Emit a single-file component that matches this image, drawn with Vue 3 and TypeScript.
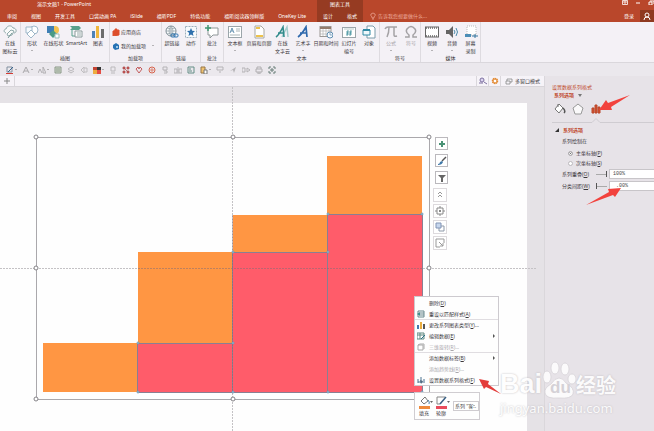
<script setup lang="ts">
import { ref } from 'vue'

interface Tool { icon: string; lines: string[]; drop?: boolean; dim?: boolean }
interface Group { id: string; name: string; tools: Tool[] }
interface MenuItem { text: string; key: string; more?: boolean; icon?: string; sub?: boolean; dim?: boolean; line?: boolean }

const tabs = ['审阅', '视图', '开发工具', '口袋动画 PA', 'iSlide', '福昕PDF', '特色功能', '福昕阅读器领鲜版', 'OneKey Lite']

// Inner markup of the 14 x 14 icons
const icons: Record<string, string> = {
  cloud: '<path d="M3 8C0 7 1 4 3 4C4 0 9 0 10 3C14 3 14 8 11 8M4 9L8 5L11 6L9 10L5 11Z" fill="#f8fafa" stroke="#8fa8aa"/><path d="M5 13L9 8" stroke="#779a98"/>',
  shapes: '<circle cx="9" cy="5" r="4" fill="#fff" stroke="#9fb7c9"/><path d="M1 2H7V8H1Z" fill="#f6fafd" stroke="#9fb7c9"/><path d="M6 5L10 9L6 13L2 9Z" fill="#fff" stroke="#9fb7c9"/>',
  online: '<circle cx="9" cy="5" r="4" fill="#f2c252"/><path d="M1 1H8V8H1Z" fill="#3f7fb5"/><path d="M7 5L11 9L7 13L3 9Z" fill="#4a9b86"/><path d="M9 9H13V13H9Z" fill="#fff" stroke="#9bb"/>',
  smart: '<path d="M1 1H10L12 3L10 5H1L3 3Z" fill="#58a08c"/><path d="M3 5V11H6" stroke="#58a08c" fill="none"/><path d="M6 6H13V12H6Z" fill="#fff" stroke="#8a9a9a"/><path d="M8 8H12M8 10H12" stroke="#9aa"/>',
  chart: '<path d="M1 6H4V13H1Z" fill="#4d82b8"/><path d="M5 1H8V13H5Z" fill="#efb73e"/><path d="M10 4H13V13H10Z" fill="#6c6c6c"/>',
  link: '<circle cx="6" cy="6" r="5" fill="#fafcfd" stroke="#7d8c94"/><path d="M1 6H11M6 1V11M2 3Q6 5 10 3M2 9Q6 7 10 9M6 1Q2 6 6 11M6 1Q10 6 6 11" fill="none" stroke="#8d9ca4" stroke-width=".7"/><rect x="6" y="9" width="4" height="3" rx="1" fill="none" stroke="#2f75b0"/><rect x="9" y="9" width="4" height="3" rx="1" fill="none" stroke="#2f75b0"/>',
  action: '<rect x="1.5" y="1.500" width="11" height="11" fill="#f7fafc" stroke="#9db0bd" stroke-dasharray="2 1"/><path d="M7 3L8.200 5.800L11 6L8.800 8L9.500 11L7 9.400L4.500 11L5.200 8L3 6L5.800 5.800Z" fill="#2e70ad"/>',
  comment: '<path d="M3 3H13V10H8L5 13V10H3Z" fill="#fff" stroke="#8e9798"/><path d="M3 0V6M0 3H6" stroke="#3f9773" stroke-width="1.500"/>',
  textbox: '<rect x=".5" y="1.500" width="13" height="11" fill="#fff" stroke="#9ba5aa"/><path d="M2 8L4 3L6 8M3 6H5" stroke="#41799f" fill="none" stroke-width=".8"/><path d="M8 4H12M8 6H12M2 10H12" stroke="#a9b4b8"/>',
  header: '<path d="M3 1H9L12 4V13H3Z" fill="#fff" stroke="#a8a8a0"/><path d="M4 2H8V4H4ZM4 10H11V12H4Z" fill="#edc24c"/>',
  wordcloud: '<path d="M7 12L12 2L13 12" stroke="#a3cccd" stroke-width="1.500" fill="none"/><path d="M1 12Q4 10 8 2L9 12M3 8H9" stroke="#318b8b" stroke-width="1.600" fill="none"/>',
  art: '<path d="M2 12Q6 9 10 2L11 12M4 8H11" stroke="#2f69ad" stroke-width="1.700" fill="none"/>',
  date: '<rect x="1" y="1.500" width="11" height="10" fill="#fff" stroke="#9b9894"/><path d="M1 3H12" stroke="#937c6d" stroke-width="2"/><path d="M4 4V11M7 4V11M10 4V11M1 6H12M1 9H12" stroke="#aaa" stroke-width=".6"/><circle cx="11" cy="10" r="3" fill="#f6fbff" stroke="#608eb0"/><path d="M11 8V10H13" stroke="#608eb0" fill="none" stroke-width=".7"/>',
  number: '<rect x=".5" y="2.500" width="13" height="10" fill="#fff" stroke="#9ba5aa"/><path d="M2 4H12" stroke="#bcc"/><path d="M6 5L5 11M9 5L8 11M4 7H10M4 9H10" stroke="#3a8d9b" stroke-width=".8"/>',
  object: '<path d="M5 1H11L13 3V13H5Z" fill="#fff" stroke="#7b9baa"/><path d="M1 5H8V10H1Z" fill="#eef7fb" stroke="#318aa5"/><path d="M1 5H8" stroke="#318aa5" stroke-width="2"/>',
  pi: '<path d="M1 4Q2 2 4 2H13M5 2Q5 8 3 12M10 2V10Q10 12 13 11" fill="none" stroke="#a4a2a5" stroke-width="1.500"/>',
  omega: '<path d="M1 12H5V10Q1 7 3 4Q7-1 11 4Q13 7 9 10V12H13" fill="none" stroke="#a4a2a5" stroke-width="1.500"/>',
  video: '<rect x=".5" y="2" width="13" height="10" fill="#fff" stroke="#656565"/><path d="M1 3H13M1 11H13" stroke="#656565" stroke-width="1.500" stroke-dasharray="1 1"/>',
  audio: '<path d="M1 5H4L8 1V13L4 9H1Z" fill="#656565"/><path d="M9 5Q11 7 9 9M11 3Q14 7 11 11" fill="none" stroke="#4b8cac"/>',
  screen: '<path d="M3 1H12V10H3Z" fill="#fff" stroke="#bbb" stroke-dasharray="1 1"/><path d="M1 9H7V12H1Z" fill="#4c8eb7"/><path d="M8 11H14M11 9V13" stroke="#3577a0"/>',
}

const groups: Group[] = [
  { id: 'cloud', name: '', tools: [{ icon: 'cloud', lines: ['在线', '图标云'] }] },
  { id: 'art', name: '插图', tools: [{ icon: 'shapes', lines: ['形状'], drop: true }, { icon: 'online', lines: ['在线形状'] }, { icon: 'smart', lines: ['SmartArt'] }, { icon: 'chart', lines: ['图表'] }] },
  { id: 'addin', name: '加载项', tools: [] },
  { id: 'link', name: '链接', tools: [{ icon: 'link', lines: ['超链接'] }, { icon: 'action', lines: ['动作'] }] },
  { id: 'note', name: '批注', tools: [{ icon: 'comment', lines: ['批注'] }] },
  { id: 'text', name: '文本', tools: [
    { icon: 'textbox', lines: ['文本框'], drop: true }, { icon: 'header', lines: ['页眉和页脚'] }, { icon: 'wordcloud', lines: ['在线', '文字云'] },
    { icon: 'art', lines: ['艺术字'], drop: true }, { icon: 'date', lines: ['日期和时间'] }, { icon: 'number', lines: ['幻灯片', '编号'] }, { icon: 'object', lines: ['对象'] }] },
  { id: 'symbol', name: '符号', tools: [{ icon: 'pi', lines: ['公式'], drop: true, dim: true }, { icon: 'omega', lines: ['符号'], dim: true }] },
  { id: 'media', name: '媒体', tools: [{ icon: 'video', lines: ['视频'], drop: true }, { icon: 'audio', lines: ['音频'], drop: true }, { icon: 'screen', lines: ['屏幕', '录制'] }] },
]

// Quick access icons, 8 x 8
const quick: string[] = [
  '<path d="M1 1H6V6H1Z" fill="none" stroke="#8290a0"/><path d="M2 6L7 1" stroke="#39658e"/><path d="M0 7.500H7" stroke="#d33c35"/>',
  '<path d="M1 7L4 1L7 7M2 5H6" fill="none" stroke="#aaa8ab"/>',
  '<path d="M0 7L2 3L4 7M5 1V7H8Z" fill="none" stroke="#b0aeb1"/>',
  '<path d="M1 1H7V7H1Z" fill="#d3ddce" stroke="#8a9788"/><path d="M2 3H6M2 5H6" stroke="#8a9788"/>',
  '<path d="M4 1L7 3L4 5L1 3ZM1 5L4 7L7 5" fill="none" stroke="#bbb9bc"/>',
  '<path d="M1 4L4 1V7ZM4 2H7V6H4" fill="none" stroke="#c0bec1"/>',
  '<path d="M0 1H4V4H0Z" fill="#c34434"/><path d="M4 1H8V4H4Z" fill="#333"/><path d="M0 4H4V8H0Z" fill="#edac40"/><path d="M4 4H8V8H4Z" fill="#e34d45"/>',
  '<path d="M2 1H6V5H2ZM2 7H6" fill="none" stroke="#bbb9bc"/>',
  '<path d="M1 1H3V3H1ZM5 1H7V3H5ZM1 5H3V7H1ZM5 5H7V7H5ZM2 2L6 6" fill="#d85858" stroke="#a64b4b" stroke-width=".7"/>',
  '<path d="M1 3L3 1L4 3L5 1L7 3L4 7Z" fill="none" stroke="#c45d5d"/>',
  '<circle cx="4" cy="4" r="3" fill="none" stroke="#d7644d"/><path d="M4 2V6M2 4H6" stroke="#d7644d" stroke-width=".7"/>',
  '<path d="M2 1H6V4H2ZM3 5H6V7H3" fill="none" stroke="#b5b3b6"/>',
  '<path d="M0 3H3V7H0ZM4 1V8M5 3H8V7H5Z" fill="none" stroke="#b5b3b6"/>',
  '<path d="M1 1H7V7H1ZM2 3H4M2 5H5" fill="none" stroke="#658e86"/>',
  '<path d="M1 1H5V7H1Z" fill="#efc270" stroke="#987644"/><path d="M4 4H7V8H4Z" fill="#fff" stroke="#777"/>',
  '<path d="M1 1H7V4H1ZM3 6H5" fill="none" stroke="#b5b3b6"/>',
  '<path d="M1 5L7 1L5 7L4 4Z" fill="#b5b3b6"/>',
  '<path d="M0 2H3V6H0ZM5 2L8 4L5 6Z" fill="none" stroke="#b5b3b6"/>',
  '<path d="M2 3V1H6V3M1 3H7V6H1ZM3 6V8H5V6" fill="none" stroke="#b0aeb1"/>',
  '<path d="M1 3V1H3M5 1H7V3M7 5V7H5M3 7H1V5M3 3H5V5H3Z" fill="none" stroke="#687e79"/>',
]

const menu: MenuItem[] = [
  { text: '删除', key: 'D' },
  { text: '重设以匹配样式', key: 'A', icon: '<path d="M1 1H7V7H1ZM3 3H7M3 5H7" fill="#fff" stroke="#69878c"/><path d="M0 4L3 2V6Z" fill="#3d8c8b"/>' },
  { text: '更改系列图表类型', key: 'Y', more: true, line: true, icon: '<path d="M0 4H2V8H0Z" fill="#4277b0"/><path d="M3 1H5V8H3Z" fill="#e9ad3e"/><path d="M6 3H8V8H6Z" fill="#555"/>' },
  { text: '编辑数据', key: 'E', sub: true, icon: '<path d="M0 1H7V7H0ZM0 3H7M3 1V7" fill="#fff" stroke="#5e8880"/><path d="M4 7L8 3" stroke="#276f86"/>' },
  { text: '三维旋转', key: 'R', more: true, dim: true, icon: '<path d="M1 2H6V7H1ZM1 2L3 1H7V6" fill="none" stroke="#aaa"/>' },
  { text: '添加数据标签', key: 'B', sub: true, line: true },
  { text: '添加趋势线', key: 'R', more: true, dim: true },
  { text: '设置数据系列格式', key: 'F', icon: '<path d="M1 3V7M4 1V7M7 3V7M1 6H6" stroke="#4b7390" fill="none"/><path d="M3 4L6 5L4 8Z" fill="#526a80"/>' },
]

const side: string[] = [
  '<path d="M5 2V8M2 5H8" stroke="#4a9276" stroke-width="2"/>',
  '<path d="M5 5L9 1" stroke="#555" stroke-width="1.500"/><path d="M1 8Q3 8 3 6L5 5L6 6Q5 9 1 9Z" fill="#3f78a8"/>',
  '<path d="M1 2H9L6 5V9H4V5Z" fill="#666"/>',
]
const float: string[] = [
  '<path d="M3 4L5 2L7 4M3 7L5 5L7 7" stroke="#999" fill="none"/>',
  '<path d="M2 2H8V8H2ZM0 5H2M8 5H10M5 0V2M5 8V10" fill="none" stroke="#888"/><path d="M4 4H6V6H4Z" fill="#888"/>',
  '<path d="M4 4H9V9H4Z" fill="#fff" stroke="#8d99a8"/><path d="M1 1H6V6H1Z" fill="#c6d6ed" stroke="#8194b5"/>',
  '<path d="M9 5V1H1V9H5M4 4L8 8M5 8H8V5" fill="none" stroke="#999"/>',
]

const bars = [
  { x: 43, top: 256, base: 256, bottom: 305, pink: false },
  { x: 138, top: 165, base: 256, bottom: 305, pink: true },
  { x: 233, top: 128, base: 165, bottom: 305, pink: true },
  { x: 327, top: 69, base: 127, bottom: 305, pink: true },
]
const frameDots = [[36, 50], [233, 50], [429, 50], [36, 181], [429, 181], [36, 312], [233, 312], [429, 312]]
const seriesDots = [[138, 256], [233, 256], [138, 305], [233, 305], [233, 165], [328, 165], [328, 305], [328, 127], [422, 127], [422, 305]]

const axis = ref('primary')
const overlap = ref('100%')
const gapWidth = ref(' .00%')
</script>

<template>
  <div class="app">
    <header class="top">
      <div class="main-tabs">
        <div class="title">演示文稿1 - PowerPoint</div>
        <nav class="tabs"><button v-for="t in tabs" :key="t">{{ t }}</button></nav>
      </div>
      <div class="context">
        <div class="context-title">图表工具</div>
        <nav class="tabs"><button>设计</button><button>格式</button></nav>
      </div>
      <div class="tell">
        <svg width="6" height="8" viewBox="0 0 6 8"><path d="M2 5Q0 3 1 2Q3 0 5 2Q6 3 4 5V6H2ZM2 7H4" fill="none" stroke="#eba18f" stroke-width=".8" /></svg>
        <span>告诉我您想要做什么...</span>
      </div>
      <div class="account">
        <div class="win">
          <button aria-label="功能区显示选项"><svg width="6" height="5" viewBox="0 0 6 5"><path d="M.5 .5H5.500V4.500H.5ZM3 1V4M1 2H5" fill="none" stroke="#fff" stroke-width=".8" /></svg></button>
          <button aria-label="最小化"><svg width="6" height="5" viewBox="0 0 6 5"><path d="M1 3H5" stroke="#fff" /></svg></button>
          <button aria-label="还原"><svg width="6" height="5" viewBox="0 0 6 5"><path d="M2 1H6V4M1 2H4V5H1Z" fill="none" stroke="#fff" /></svg></button>
        </div>
        <div class="login">
          <button>登录</button>
          <button class="person" aria-label="共享"><svg width="8" height="8" viewBox="0 0 8 8"><circle cx="4" cy="3" r="2" fill="none" stroke="#fff" /><path d="M1 8Q1 5 4 5Q7 5 7 8" fill="none" stroke="#fff" /></svg></button>
        </div>
      </div>
    </header>

    <section class="ribbon">
      <div v-for="g in groups" :key="g.id" class="group" :class="g.id">
        <div v-if="g.id === 'addin'" class="addins">
          <button><svg width="8" height="8" viewBox="0 0 8 8"><path d="M1 3L7 2V7L1 8ZM3 3V1H5V3" fill="#dd4e2c" stroke="#dd4e2c" /></svg><span>应用商店</span></button>
          <button><svg width="8" height="8" viewBox="0 0 8 8"><path d="M1 3L4 1L7 3V7L3 8L1 6Z" fill="#2673b5" /><circle cx="5" cy="5" r="1" fill="#c8e4f5" /></svg><span>我的加载项</span><i class="caret"></i></button>
        </div>
        <div v-else class="tools">
          <button v-for="t in g.tools" :key="t.icon" class="tool" :class="{ dim: t.dim }">
            <svg width="14" height="14" viewBox="0 0 14 14" v-html="icons[t.icon]"></svg>
            <span v-for="l in t.lines" :key="l">{{ l }}</span>
            <i v-if="t.drop" class="caret"></i>
          </button>
        </div>
        <div class="group-name">{{ g.name }}</div>
      </div>
    </section>

    <div class="quick">
      <button v-for="(q, i) in quick" :key="i" aria-label="快速访问">
        <svg width="8" height="8" viewBox="0 0 8 8" v-html="q"></svg>
        <i v-if="[0, 1, 2, 6, 14].includes(i)" class="caret"></i>
      </button>
    </div>

    <main class="body">
      <div class="work">
        <div class="doc-tabs">
          <button class="plus" aria-label="新建"><svg width="6" height="6" viewBox="0 0 6 6"><path d="M3 0V6M0 3H6" stroke="#888" /></svg></button>
          <div class="doc-space"></div>
          <button class="small" aria-label="搜索"><svg width="8" height="8" viewBox="0 0 8 8"><circle cx="3" cy="3" r="2" fill="#dcd5ef" stroke="#7c70a0" /><path d="M5 5L8 7M0 6H4" stroke="#7c70a0" /></svg></button>
          <button class="small" aria-label="设置"><svg width="8" height="8" viewBox="0 0 8 8"><circle cx="4" cy="4" r="2.500" fill="#fff" stroke="#e28a34" stroke-width="1.500" stroke-dasharray="1.400 .5" /><circle cx="4" cy="4" r="2" fill="none" stroke="#e28a34" /></svg></button>
          <button class="multi"><svg width="8" height="7" viewBox="0 0 8 7"><path d="M2 3V1H7V4H5M1 3H5V6H1Z" fill="none" stroke="#888" stroke-width=".8" /></svg>多窗口模式</button>
        </div>
        <div class="stage">
          <div class="slide"></div>
          <svg class="chart" width="545" height="344" viewBox="0 0 545 344">
            <path d="M232.500 0V344M0 181.500H537" class="guide" />
            <template v-for="b in bars" :key="b.x">
              <rect :x="b.x" :y="b.top" width="95" :height="(b.pink ? b.base : b.bottom) - b.top" fill="#ff9643" />
              <rect v-if="b.pink" :x="b.x" :y="b.base" width="95" :height="b.bottom - b.base" fill="#ff5c6a" />
            </template>
            <path d="M137.500 305.500V256.500H232.500V165.500H327.500V127.500H422.500V305.500ZM232.500 165V305M327.500 127V305" class="outline" />
            <rect x="36.500" y="50.500" width="393" height="262" fill="none" stroke="#aaa8ac" />
            <path d="M232.500 128V305M138 181.500H422" class="guide faint" />
            <circle v-for="d in frameDots" :key="d.join()" :cx="d[0]" :cy="d[1]" r="2" fill="#fff" stroke="#858388" />
            <circle v-for="d in seriesDots" :key="d.join()" :cx="d[0]" :cy="d[1]" r="1" fill="#dff1fa" stroke="#6397b8" />
          </svg>

          <div class="side">
            <button v-for="(s, i) in side" :key="i" aria-label="图表按钮"><svg width="10" height="10" viewBox="0 0 10 10" v-html="s"></svg></button>
          </div>
          <div class="side floating">
            <button v-for="(s, i) in float" :key="i" aria-label="浮动工具"><svg width="10" height="10" viewBox="0 0 10 10" v-html="s"></svg></button>
          </div>

          <div class="menu" role="menu">
            <button v-for="m in menu" :key="m.text" role="menuitem" :class="{ dim: m.dim, line: m.line }">
              <svg width="8" height="8" viewBox="0 0 8 8" v-html="m.icon ?? ''"></svg>
              <span>{{ m.text }}(<u>{{ m.key }}</u>){{ m.more ? '...' : '' }}</span>
              <i v-if="m.sub" class="right"></i>
            </button>
          </div>
          <div class="mini">
            <button><svg width="14" height="13" viewBox="0 0 14 13"><path d="M2 5L6 1L9 5L5 8Z" fill="#fff" stroke="#777" /><path d="M9 4Q11 6 10 8" stroke="#467fa9" fill="none" /><path d="M0 10H11V13H0Z" fill="#ef8a3c" /><path d="M11 5H14L12.500 7Z" fill="#666" /></svg>填充</button>
            <button><svg width="14" height="13" viewBox="0 0 14 13"><path d="M9 1H1V8H4" fill="none" stroke="#888" /><path d="M4 8L10 1" stroke="#385f83" stroke-width="1.500" /><path d="M0 10H11V13H0Z" fill="#e94c5c" /><path d="M11 5H14L12.500 7Z" fill="#666" /></svg>轮廓</button>
            <select aria-label="图表元素"><option>系列 "客..</option></select>
            <i class="caret"></i>
          </div>
          <svg class="menu-arrow" width="22" height="16" viewBox="0 0 22 16"><path d="M0 0L10 2L9 5L22 15L7 8L5 10Z" fill="#e33d3b" /></svg>
        </div>
      </div>

      <aside class="pane">
        <h2>设置数据系列格式</h2>
        <button class="options">系列选项<i></i></button>
        <div class="kinds">
          <button aria-label="填充与线条"><svg width="12" height="12" viewBox="0 0 12 12"><path d="M1 6L5 1L9 5L5 10ZM4 4V1" fill="#fff" stroke="#777" /><path d="M9 5Q12 8 10 10" fill="none" stroke="#555" stroke-width="1.500" /></svg></button>
          <button aria-label="效果"><svg width="12" height="12" viewBox="0 0 12 12"><path d="M6 1L11 5L9 11H3L1 5Z" fill="#faf9fa" stroke="#999" /></svg></button>
          <button aria-label="系列选项"><svg width="12" height="12" viewBox="0 0 12 12"><path d="M2 5H4V10H2ZM5 2H7V10H5ZM8 4H10V10H8Z" fill="#d8532f" stroke="#b7472a" /></svg></button>
        </div>
        <svg class="notch" width="102" height="5" viewBox="0 0 102 5"><path d="M0 4.500H40L44 .5L48 4.500H102" fill="none" stroke="#cfccd1" /></svg>
        <h3><i></i>系列选项</h3>
        <fieldset>
          <legend>系列绘制在</legend>
          <label><input v-model="axis" type="radio" name="axis" value="primary" /><span>主坐标轴(<u>P</u>)</span></label>
          <label><input v-model="axis" type="radio" name="axis" value="secondary" /><span>次坐标轴(<u>S</u>)</span></label>
        </fieldset>
        <div class="field">
          <label for="overlap">系列重叠(<u>O</u>)</label>
          <input class="range" type="range" value="100" aria-label="系列重叠滑块" />
          <input id="overlap" v-model="overlap" class="value" type="text" />
        </div>
        <div class="field">
          <label for="gap">分类间距(<u>W</u>)</label>
          <input class="range" type="range" value="0" aria-label="分类间距滑块" />
          <input id="gap" v-model="gapWidth" class="value" type="text" />
        </div>
        <svg class="arrow-top" width="32" height="18" viewBox="0 0 32 18"><path d="M0 15L7 5L9 8L31 0L12 12L13 15Z" fill="#f2423d" /></svg>
        <svg class="arrow-low" width="36" height="18" viewBox="0 0 36 18"><path d="M35 1L29 10L27 8L0 18L23 5L22 2Z" fill="#f2423d" /></svg>
      </aside>
    </main>

    <div class="mark">
      <div class="brand">
        <span class="bai">Bai</span>
        <span class="paw">
          <svg width="34" height="38" viewBox="0 0 34 38"><g fill="#fff" stroke="#d4d1d6" stroke-width=".8"><ellipse cx="5" cy="16" rx="4" ry="6" /><ellipse cx="13" cy="7" rx="4" ry="6" /><ellipse cx="23" cy="8" rx="4" ry="6" /><ellipse cx="30" cy="18" rx="4" ry="5" /><path d="M17 17Q21 17 24 22Q33 27 31 33Q29 38 17 37Q4 38 3 32Q2 27 9 23Q13 17 17 17Z" /></g></svg>
          <b>du</b>
        </span>
        <span class="jy">经验</span>
      </div>
      <div class="url">jingyan.baidu.com</div>
    </div>
  </div>
</template>

<style>
body { margin: 0; overflow: hidden; }
</style>

<style scoped>
.app { position: relative; display: flex; flex-direction: column; min-height: 100vh; overflow: hidden; background: #e7e3e8; color: #3b383c; font: 5px/8px "Noto Sans", "Noto Sans CJK SC", sans-serif; }
button { display: flex; align-items: center; margin: 0; padding: 0; border: 0; background: none; color: inherit; font: inherit; white-space: nowrap; }
svg { display: block; flex: none; }
.caret { display: block; width: 0; height: 0; border: 1px solid transparent; border-top-color: #777; }

.top { display: flex; height: 22px; background: #b9472b; color: #fff; white-space: nowrap; }
.main-tabs { width: 317px; }
.title { height: 9px; padding-left: 37px; }
.tabs { display: flex; gap: 14px; height: 13px; padding-left: 7px; align-items: center; }
.context { width: 46px; background: #963b22; }
.context .tabs { padding-left: 6px; }
.context-title { height: 9px; text-align: center; }
.tell { display: flex; flex: 1; align-items: center; gap: 2px; padding: 9px 0 0 7px; color: #ecaa9b; }
.win { display: flex; justify-content: flex-end; gap: 7px; height: 10px; }
.win button { height: 5px; }
.login { display: flex; justify-content: flex-end; align-items: center; gap: 6px; height: 12px; }
.person { height: 12px; padding: 0 3px; background: #8e3920; }

.ribbon { display: flex; box-sizing: border-box; height: 41px; background: #f4f1f6; border-bottom: 1px solid #dad7dc; }
.group { display: flex; flex-direction: column; box-sizing: border-box; border-right: 1px solid #dedbe0; }
.tools { display: grid; flex: 1; align-items: start; padding-top: 3px; }
.tool { flex-direction: column; justify-self: center; }
.tool .caret { margin-top: 3px; }
.dim { color: #aaa7ac; }
.group-name { height: 7px; line-height: 7px; text-align: center; }
.cloud { width: 21px; }
.art { width: 89px; }
.art .tools { grid-template-columns: 22px 21px 25px 18px; }
.addin { width: 52px; }
.link { width: 39px; }
.link .tools { grid-template-columns: 20px 18px; }
.note { width: 23px; }
.text { width: 156px; }
.text .tools { grid-template-columns: 22px 26px 21px 20px 26px 20px 20px; }
.symbol { width: 41px; }
.symbol .tools { grid-template-columns: 22px 18px; }
.media { width: 60px; }
.media .tools { grid-template-columns: 22px 18px 19px; }
.addins { display: flex; flex: 1; flex-direction: column; gap: 6px; padding: 6px 0 0 2px; }
.addins button { gap: 1px; }
.addins .caret { margin-left: 5px; }

.quick { display: flex; align-items: center; gap: 5px; height: 13px; padding-left: 6px; background: #ebe8ed; }
.quick button { gap: 1px; }

.body { display: flex; flex: 1; }
.work { display: flex; flex: 1; flex-direction: column; min-width: 0; }
.doc-tabs { display: flex; box-sizing: border-box; height: 11px; border-bottom: 1px solid #d8d5da; background: #f6f3f8; }
.doc-tabs button { justify-content: center; box-sizing: border-box; border-right: 1px solid #dad7dc; }
.plus { width: 15px; }
.doc-space { flex: 1; border-right: 1px solid #dad7dc; }
.small { width: 12px; }
.multi { width: 44px; gap: 2px; }
.stage { position: relative; flex: 1; box-sizing: border-box; padding: 16px 17px 0 0; background: #e5e2e6; border-right: 1px solid #dad7db; display: flex; }
.slide { flex: 1; background: #fefefe; }
.chart { position: absolute; left: 0; top: 0; }
.guide { fill: none; stroke: #c4c2c5; stroke-dasharray: 2 1; }
.faint { stroke: #7d6c78; stroke-opacity: .5; }
.outline { fill: none; stroke: #8a7f92; }

.side { position: absolute; left: 435px; top: 50px; display: flex; flex-direction: column; gap: 4px; }
.side button { justify-content: center; box-sizing: border-box; width: 13px; height: 13px; border: 1px solid #bbb9bd; background: #fff; }
.floating { left: 433px; top: 101px; gap: 2px; }
.floating button { width: 14px; height: 14px; border-color: #dddadd; }

.menu { position: absolute; left: 414px; top: 209px; box-sizing: border-box; width: 85px; border: 1px solid #cdcacf; background: #fefefe; }
.menu button { box-sizing: border-box; width: 100%; height: 11px; padding-left: 2px; gap: 4px; }
.menu .line { border-top: 1px solid #e0dde1; }
.right { width: 0; height: 0; margin-left: auto; margin-right: 3px; border: 2px solid transparent; border-right: 0; border-left-color: #555; }
.mini { position: absolute; left: 414px; top: 305px; box-sizing: border-box; width: 66px; height: 28px; display: flex; align-items: center; gap: 3px; padding-left: 4px; border: 1px solid #d0cdd1; background: #fefefe; }
.mini button { flex-direction: column; align-items: flex-start; }
.mini select { appearance: none; box-sizing: border-box; width: 26px; height: 10px; padding: 0 1px; border: 1px solid #cfccd0; border-radius: 0; background: #fff; color: #444; font: inherit; }
.mini .caret { position: absolute; right: 4px; }
.menu-arrow { position: absolute; left: 479px; top: 292px; }

.pane { position: relative; box-sizing: border-box; width: 109px; padding: 7px 0 0 7px; }
h2, h3 { margin: 0; font: inherit; color: #c04a2c; }
.options { padding-left: 2px; gap: 4px; color: #c04a2c; font-weight: 700; }
.options i { border: 2px solid transparent; border-top: 3px solid #777; border-bottom: 0; }
.kinds { display: flex; gap: 6px; padding: 4px 0 0 2px; }
.notch { margin-top: 3px; }
h3 { display: flex; align-items: center; gap: 4px; padding: 3px 0 0 3px; font-weight: 700; }
h3 i { border: 2px solid #333; border-left-color: transparent; border-top-color: transparent; }
fieldset { margin: 0; padding: 0 0 0 10px; border: 0; }
legend { padding: 3px 0; }
fieldset label { display: flex; align-items: center; gap: 3px; height: 10px; padding-left: 6px; }
fieldset input { appearance: none; box-sizing: border-box; width: 5px; height: 5px; margin: 0; border: 1px solid #bbb8bc; border-radius: 50%; background: #fff; }
fieldset input:checked { background: #444; box-shadow: inset 0 0 0 1px #fff; }
.field { display: flex; align-items: center; height: 12px; padding-left: 10px; }
.field label { width: 34px; white-space: nowrap; }
.range { appearance: none; width: 11px; height: 7px; margin: 0 2px 0 0; background: linear-gradient(#aaa, #aaa) center / 100% 1px no-repeat; }
.range::-webkit-slider-thumb { appearance: none; width: 1px; height: 6px; background: #555; }
.value { flex: 1; min-width: 0; box-sizing: border-box; height: 10px; padding: 0 3px; border: 1px solid #c8c5c9; border-right: 0; border-radius: 0; background: #fff; color: #444; font: 5px "Liberation Mono", monospace; }
.arrow-top { position: absolute; left: 54px; top: 19px; }
.arrow-low { position: absolute; left: 41px; top: 111px; }

.mark { position: absolute; right: 38px; bottom: 14px; opacity: .85; color: #fff; pointer-events: none; text-shadow: 0 0 2px #b3b0b5; }
.brand { display: flex; align-items: flex-end; height: 38px; }
.bai { font: 700 27px/30px "Liberation Sans", sans-serif; }
.paw { position: relative; }
.paw b { position: absolute; left: 8px; bottom: 3px; color: #d2cfd4; font: 700 17px/16px "Liberation Sans", sans-serif; text-shadow: none; }
.jy { font: 700 20px/28px "Noto Sans CJK SC", sans-serif; }
.url { font: 13px/18px "Noto Sans", sans-serif; }
</style>
